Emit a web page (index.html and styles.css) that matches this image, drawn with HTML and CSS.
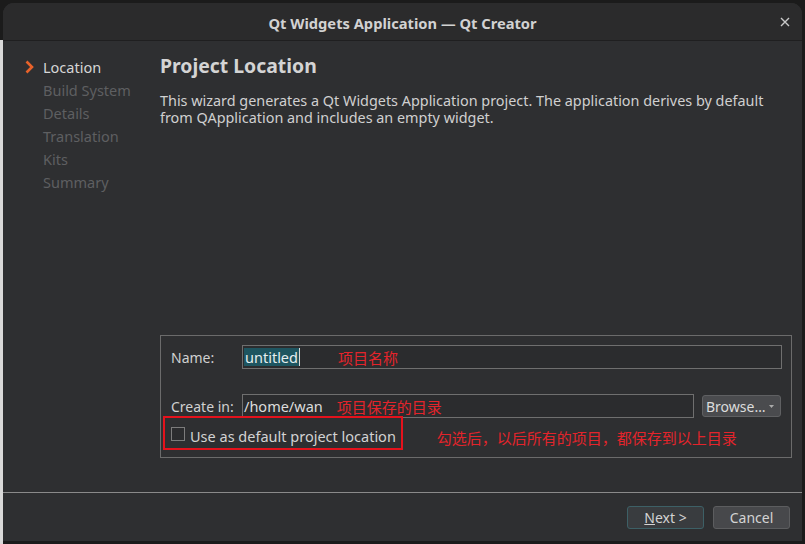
FILE: index.html
```html
<!DOCTYPE html>
<html>
<head>
<meta charset="utf-8">
<link rel="stylesheet" href="styles.css">
</head>
<body>
<div class="window">
  <div class="titlebar">
    <span class="title">Qt Widgets Application — Qt Creator</span>
    <svg class="close" width="10" height="10" viewBox="0 0 10 10"><path d="M1 1L9 9M9 1L1 9" stroke="#c9c9c9" stroke-width="1.4"/></svg>
  </div>
  <div class="content">
    <div class="sidebar">
      <div class="step active"><span class="mark"><svg width="9" height="14" viewBox="0 0 9 14"><path d="M1.5 1.5L7 7L1.5 12.5" fill="none" stroke="#e8622a" stroke-width="2.6"/></svg></span>Location</div>
      <div class="step"><span class="mark"></span>Build System</div>
      <div class="step"><span class="mark"></span>Details</div>
      <div class="step"><span class="mark"></span>Translation</div>
      <div class="step"><span class="mark"></span>Kits</div>
      <div class="step"><span class="mark"></span>Summary</div>
    </div>
    <div class="main">
      <h1 class="heading">Project Location</h1>
      <p class="desc">This wizard generates a Qt Widgets Application project. The application derives by default from QApplication and includes an empty widget.</p>
      <div class="group">
        <div class="row name-row">
          <span class="label">Name:</span>
          <div class="field grow"><span class="sel">untitled</span><span class="caret"></span><span class="note note-name">项目名称</span></div>
        </div>
        <div class="row create-row">
          <span class="label">Create in:</span>
          <div class="field grow path"><span>/home/wan</span><span class="note note-path">项目保存的目录</span></div>
          <div class="browse">Browse…<svg class="drop" width="5" height="3" viewBox="0 0 5 3"><path d="M0 0H5L2.5 3Z" fill="#aaa"/></svg></div>
        </div>
        <div class="row check-row">
          <span class="checkbox"></span>
          <span class="check-label">Use as default project location</span>
          <span class="note note-check">勾选后，以后所有的项目，都保存到以上目录</span>
          <div class="redbox"></div>
        </div>
      </div>
    </div>
  </div>
  <div class="footer">
    <div class="btn next"><span class="u">N</span>ext &gt;</div>
    <div class="btn cancel">Cancel</div>
  </div>
</div>
</body>
</html>
```
FILE: styles.css
```css
html, body {
  margin: 0;
  padding: 0;
}
body {
  width: 805px;
  height: 544px;
  overflow: hidden;
  background:
    linear-gradient(to bottom, #1b1b1b 0 40px, transparent 40px),
    linear-gradient(to right, #d9d9d9 0 3px, #1b1b1b 3px);
  font-family: "Noto Sans", "Noto Sans CJK SC", sans-serif;
  color: #d3d3d3;
}
.window {
  position: relative;
  margin: 3px 0 0 3px;
  width: 799px;
  height: 538px;
  background: #2e2f31;
  border-radius: 11px 11px 0 0;
  display: flex;
  flex-direction: column;
  overflow: hidden;
}
.titlebar {
  height: 37px;
  flex: none;
  background: #2b2b2c;
  border-bottom: 1px solid #1f1f20;
  display: flex;
  align-items: center;
  justify-content: center;
  position: relative;
}
.title {
  font-weight: bold;
  font-size: 14.7px;
  color: #d2d2d2;
  margin-top: 2px;
}
.close {
  position: absolute;
  right: 12px;
  top: 14px;
}
.content {
  flex: 1;
  display: flex;
}
.sidebar {
  width: 135px;
  padding: 14px 0 0 22px;
}
.step {
  display: flex;
  align-items: center;
  height: 23px;
  font-size: 14.5px;
  color: #5e5f61;
}
.step.active {
  color: #d6d6d6;
}
.mark {
  width: 18px;
  display: flex;
  align-items: center;
}
.main {
  width: 632px;
  padding-top: 13px;
}
.heading {
  margin: 0;
  font-size: 19.4px;
  line-height: 24px;
  font-weight: bold;
  color: #d4d4d4;
}
.desc {
  margin: 14px 0 0 0;
  font-size: 14.4px;
  line-height: 17px;
  color: #d0d0d0;
}
.group {
  position: relative;
  margin-top: 209px;
  border: 1px solid #6b6b6b;
  padding: 9px 9px 0 10px;
  box-sizing: border-box;
  height: 123px;
}
.row {
  display: flex;
  align-items: center;
}
.label {
  width: 71px;
  font-size: 14px;
  color: #d0d0d0;
}
.field {
  height: 24px;
  box-sizing: border-box;
  border: 1px solid #6f6f6f;
  background: #2b2c2e;
  display: flex;
  align-items: center;
  padding-left: 1px;
  font-size: 14.5px;
  color: #dcdcdc;
}
.grow { flex: 1; }
.sel {
  background: #1e5560;
  color: #e6eef0;
  padding: 0 1px;
  line-height: 18px;
}
.caret {
  width: 1px;
  height: 18px;
  background: #d8d8d8;
}
.note {
  color: #e3242b;
  font-size: 15px;
  font-family: "Noto Sans CJK SC", sans-serif;
}
.note-name { margin-left: 38px; }
.note-path { margin-left: 14px; }
.create-row { margin-top: 25px; }
.path { margin-right: 8px; }
.browse {
  width: 79px;
  height: 22px;
  box-sizing: border-box;
  border: 1px solid #5f6062;
  border-radius: 3px;
  background: #4a4b4e;
  display: flex;
  align-items: center;
  padding-left: 3px;
  font-size: 14px;
  color: #dcdcdc;
  position: relative;
  margin-right: 1px;
}
.drop {
  position: absolute;
  right: 6px;
  top: 9px;
}
.check-row {
  position: relative;
  margin-top: 7px;
  height: 18px;
}
.checkbox {
  width: 14px;
  height: 14px;
  box-sizing: border-box;
  border: 1px solid #7c7c7c;
  background: #2b2c2e;
  margin-right: 5px;
}
.check-label {
  font-size: 14.5px;
  color: #d3d3d3;
  margin-top: 3px;
}
.note-check {
  margin-left: 41px;
  margin-top: 6px;
}
.redbox {
  position: absolute;
  left: -8px;
  top: -9px;
  width: 240px;
  height: 34px;
  box-sizing: border-box;
  border: 2px solid #e4121c;
}
.footer {
  flex: none;
  height: 49px;
  box-sizing: border-box;
  border-top: 1px solid #8a8a8a;
  display: flex;
  justify-content: flex-end;
  align-items: flex-start;
  gap: 9px;
  padding: 13px 12px 0 0;
}
.btn {
  width: 77px;
  height: 23px;
  box-sizing: border-box;
  border-radius: 3px;
  display: flex;
  align-items: center;
  justify-content: center;
  font-size: 14px;
  color: #d3d3d3;
}
.next {
  background: #393c3f;
  border: 1px solid #3d6066;
}
.cancel {
  background: #47484b;
  border: 1px solid #5c5d5f;
}
.u {
  text-decoration: underline;
}
```
